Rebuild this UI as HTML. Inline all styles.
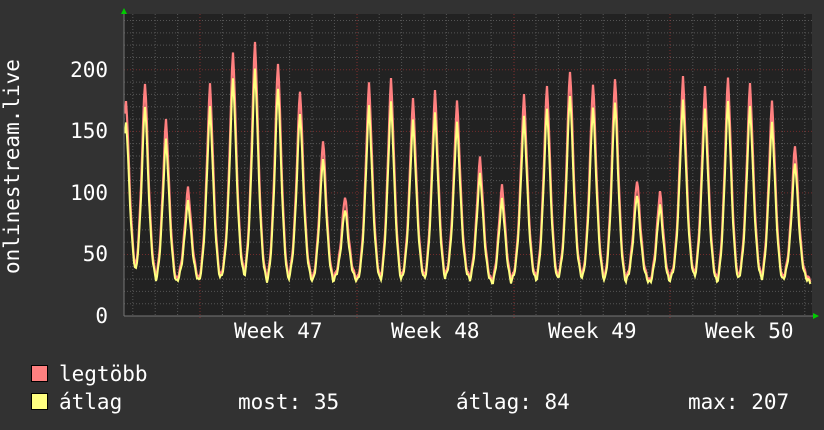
<!DOCTYPE html>
<html><head><meta charset="utf-8"><style>
html,body{margin:0;padding:0;background:#323232;}
body{width:824px;height:430px;overflow:hidden;position:relative;font-family:"DejaVu Sans Mono","Liberation Mono",monospace;color:#fff;}
.t{position:absolute;font-size:21px;line-height:20px;white-space:pre;}
.sq{position:absolute;width:15px;height:15px;border:1px solid #000;}
</style></head><body>
<svg id="g" width="824" height="430" style="position:absolute;left:0;top:0"></svg>
<div class="t" style="left:0;top:0;transform-origin:0 0;transform:translate(2px,274px) rotate(-90deg);">onlinestream.live</div>
<div class="t" style="left:60px;top:306px;width:48px;text-align:right">0</div>
<div class="t" style="left:60px;top:244px;width:48px;text-align:right">50</div>
<div class="t" style="left:60px;top:183px;width:48px;text-align:right">100</div>
<div class="t" style="left:60px;top:121px;width:48px;text-align:right">150</div>
<div class="t" style="left:60px;top:60px;width:48px;text-align:right">200</div>
<div class="t" style="left:234px;top:321px">Week 47</div>
<div class="t" style="left:391px;top:321px">Week 48</div>
<div class="t" style="left:548px;top:321px">Week 49</div>
<div class="t" style="left:705px;top:321px">Week 50</div>
<div class="sq" style="left:31px;top:365px;background:#ff8080"></div>
<div class="sq" style="left:31px;top:393px;background:#ffff80"></div>
<div class="t" style="left:59px;top:364px">legtöbb</div>
<div class="t" style="left:59px;top:392px">átlag</div>
<div class="t" style="left:238px;top:392px">most: 35</div>
<div class="t" style="left:456px;top:392px">átlag: 84</div>
<div class="t" style="left:688px;top:392px">max: 207</div>
<script>
var s='';
var L=124,R=812,T=14,B=316;
s+='<rect x="'+L+'" y="'+T+'" width="'+(R-L)+'" height="'+(B-T)+'" fill="#222"/>';
for(var v=10;v<=240;v+=10){var y=B-v*1.231;if(v%50)s+='<line x1="'+L+'" x2="'+R+'" y1="'+y+'" y2="'+y+'" stroke="#555" stroke-dasharray="1,2"/>';}
for(var d=0;d<31;d++){var x=200+(d-3)*22.4;if(x>L&&x<R&&(d-3)%7)s+='<line x1="'+x+'" x2="'+x+'" y1="'+T+'" y2="'+B+'" stroke="#555" stroke-dasharray="1,2"/>';}
for(var v=50;v<=200;v+=50){var y=B-v*1.231;s+='<line x1="'+L+'" x2="'+R+'" y1="'+y+'" y2="'+y+'" stroke="#a33" stroke-opacity="0.6" stroke-dasharray="1,2"/>';}
[200,357,514,670].forEach(function(x){s+='<line x1="'+x+'" x2="'+x+'" y1="'+T+'" y2="'+(B+4)+'" stroke="#a33" stroke-opacity="0.7" stroke-dasharray="1,2"/>';});
var pk=[100,82,120,188,85,52,42,62,90,140,196,84,80,100,92,102,158,186,96,86,70,84,78,180,192,78,88,78,84,102,145];
var px=[126,145,166,188,210,233,255,278,300,323,345,369,391,413,435,457,480,502,524,547,570,593,615,637,660,683,705,728,750,772,795];
function val(x,f){var best=290;for(var i=0;i<pk.length;i++){var dx=(x-px[i])/4.2;var base=280+((i*7)%5)*2;var p=pk[i]+(f?(B-pk[i])*0.09:0);var yy=base-(base-p)*Math.exp(-Math.pow(Math.abs(dx),1.5)/1.3);if(yy<best)best=yy;}
return best+(f?2:0)+Math.sin(x*1.7)*2;}
var r='',yl='';for(var x=L+1;x<=R-1;x+=1){r+=(x==L+1?'M':'L')+x+','+val(x,0).toFixed(1);yl+=(x==L+1?'M':'L')+x+','+val(x,1).toFixed(1);}
s+='<path d="'+r+'" fill="none" stroke="#ff8080" stroke-width="2.2"/>';
s+='<path d="'+yl+'" fill="none" stroke="#ffff80" stroke-width="2"/>';
s+='<line x1="'+L+'" x2="'+L+'" y1="10" y2="'+B+'" stroke="#777"/>';
s+='<line x1="'+L+'" x2="'+(R+2)+'" y1="'+B+'" y2="'+B+'" stroke="#777"/>';
s+='<polygon points="121,14 127,14 124,8" fill="#0c0"/>';
s+='<polygon points="813,313 813,319 819,316" fill="#0c0"/>';
document.getElementById('g').innerHTML=s;
</script>
</body></html>
